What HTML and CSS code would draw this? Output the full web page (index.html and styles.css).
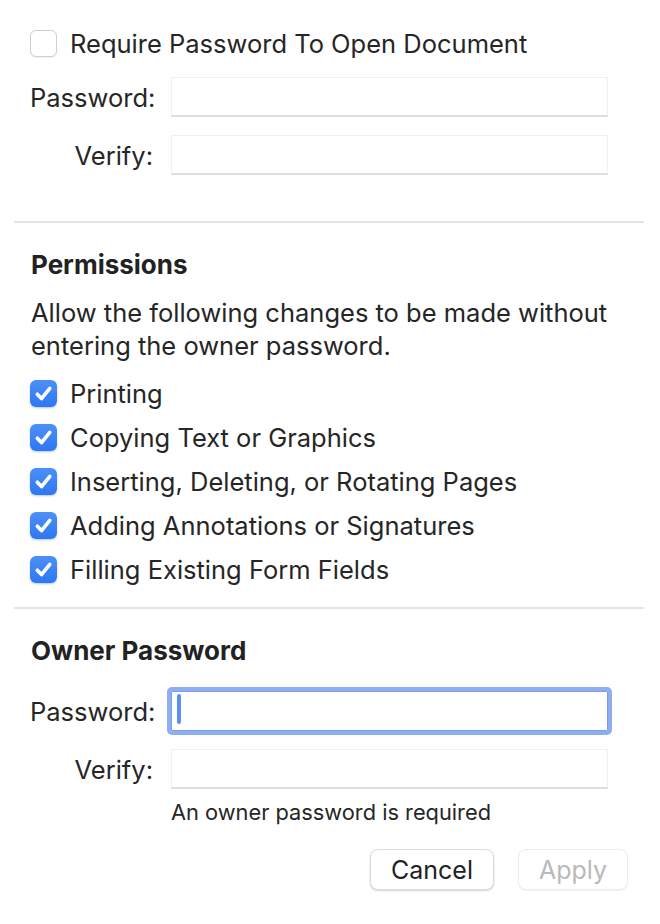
FILE: index.html
```html
<!DOCTYPE html>
<html>
<head>
<meta charset="utf-8">
<link rel="stylesheet" href="styles.css">
</head>
<body>
<div class="dialog">
  <div class="pad">
    <label class="check-row first">
      <span class="box"></span>
      <span class="check-text">Require Password To Open Document</span>
    </label>
    <div class="form-row r1">
      <span class="lbl">Password:</span>
      <span class="field"></span>
    </div>
    <div class="form-row r2">
      <span class="lbl">Verify:</span>
      <span class="field"></span>
    </div>
  </div>
  <div class="divider d1"></div>
  <div class="pad">
    <h2 class="heading h-perm">Permissions</h2>
    <p class="para">Allow the following changes to be made without entering the owner password.</p>
    <div class="checks">
      <label class="check-row"><span class="box on"><svg viewBox="0 0 27 27"><path d="M7.3 14.2 L11.5 18.6 L19.8 8.4" fill="none" stroke="#fff" stroke-width="3.6" stroke-linecap="round" stroke-linejoin="round"/></svg></span><span class="check-text">Printing</span></label>
      <label class="check-row"><span class="box on"><svg viewBox="0 0 27 27"><path d="M7.3 14.2 L11.5 18.6 L19.8 8.4" fill="none" stroke="#fff" stroke-width="3.6" stroke-linecap="round" stroke-linejoin="round"/></svg></span><span class="check-text">Copying Text or Graphics</span></label>
      <label class="check-row"><span class="box on"><svg viewBox="0 0 27 27"><path d="M7.3 14.2 L11.5 18.6 L19.8 8.4" fill="none" stroke="#fff" stroke-width="3.6" stroke-linecap="round" stroke-linejoin="round"/></svg></span><span class="check-text">Inserting, Deleting, or Rotating Pages</span></label>
      <label class="check-row"><span class="box on"><svg viewBox="0 0 27 27"><path d="M7.3 14.2 L11.5 18.6 L19.8 8.4" fill="none" stroke="#fff" stroke-width="3.6" stroke-linecap="round" stroke-linejoin="round"/></svg></span><span class="check-text">Adding Annotations or Signatures</span></label>
      <label class="check-row"><span class="box on"><svg viewBox="0 0 27 27"><path d="M7.3 14.2 L11.5 18.6 L19.8 8.4" fill="none" stroke="#fff" stroke-width="3.6" stroke-linecap="round" stroke-linejoin="round"/></svg></span><span class="check-text">Filling Existing Form Fields</span></label>
    </div>
  </div>
  <div class="divider d2"></div>
  <div class="pad">
    <h2 class="heading h-owner">Owner Password</h2>
    <div class="form-row r3">
      <span class="lbl">Password:</span>
      <span class="field focus"><span class="caret"></span></span>
    </div>
    <div class="form-row r4">
      <span class="lbl">Verify:</span>
      <span class="field"></span>
    </div>
    <div class="hint">An owner password is required</div>
    <div class="buttons">
      <button class="btn cancel">Cancel</button>
      <button class="btn apply" disabled>Apply</button>
    </div>
  </div>
</div>
</body>
</html>
```

FILE: styles.css
```css
* { box-sizing: border-box; }
html, body { margin: 0; padding: 0; background: #ffffff; }
body {
  font-family: Inter, "Liberation Sans", sans-serif;
  color: #262626;
  width: 660px;
  height: 924px;
  overflow: hidden;
}
.dialog { padding-top: 30px; }
.pad { padding: 0 52px 0 30px; }

.check-row {
  display: flex;
  align-items: center;
  height: 27px;
  gap: 13px;
  font-size: 25.5px;
  white-space: nowrap;
}
.checks .check-row { height: 44px; }
.box {
  width: 27px;
  height: 27px;
  flex: none;
  border-radius: 6px;
  background: #ffffff;
  border: 1px solid #cfcfcf;
  box-shadow: 0 1px 1px rgba(0,0,0,0.06);
  display: flex;
}
.box.on {
  border: none;
  background: linear-gradient(#4b90f8, #2f77f2);
  box-shadow: 0 1px 2px rgba(40,100,220,0.35);
}
.box svg { width: 27px; height: 27px; }
.check-text { letter-spacing: 0; }

.form-row {
  display: flex;
  align-items: center;
  height: 40px;
  gap: 18px;
  font-size: 25.5px;
}
.r1 { margin-top: 20px; }
.r2 { margin-top: 18px; }
.lbl {
  width: 123px;
  flex: none;
  text-align: right;
  white-space: nowrap;
}
.field {
  flex: 1;
  height: 40px;
  background: #fff;
  border: 1px solid #f0f0f0;
  border-bottom: 2px solid #dedede;
  position: relative;
}
.field.focus {
  border: 1px solid #7a9de6;
  outline: 4px solid #8eaef2;
  border-radius: 1px;
  outline-offset: 0px;
}
.caret {
  position: absolute;
  left: 5px;
  top: 2px;
  width: 4px;
  height: 30px;
  border-radius: 2px;
  background: #5b8ff5;
}

.divider {
  height: 2px;
  background: #e4e4e4;
  margin: 0 16px 0 14px;
}
.d1 { margin-top: 46px; }
.d2 { margin-top: 16px; }

.heading {
  margin: 26px 0 0 1px;
  font-size: 26px;
  font-weight: 700;
  line-height: 32px;
  color: #222;
}
.para {
  margin: 15px -20px 0 1px;
  font-size: 25.5px;
  line-height: 33px;
  letter-spacing: 0;
}
.checks { margin-top: 9px; }

.r3 { margin-top: 24px; }
.r4 { margin-top: 18px; }

.hint {
  margin: 11px 0 0 141px;
  font-size: 21.8px;
  line-height: 24px;
  white-space: nowrap;
}
.buttons {
  display: flex;
  justify-content: flex-end;
  gap: 24px;
  margin-top: 25px;
  margin-right: -20px;
}
.btn {
  font-family: inherit;
  font-size: 25px;
  height: 41px;
  border-radius: 8px;
  background: #fff;
  border: 1px solid #dcdcdc;
  box-shadow: 0 1px 2px rgba(0,0,0,0.18);
  padding: 0;
}
.cancel { width: 124px; color: #222; }
.apply {
  width: 110px;
  color: #b9b9b9;
  border-color: #ececec;
  box-shadow: 0 1px 1px rgba(0,0,0,0.05);
}
```
